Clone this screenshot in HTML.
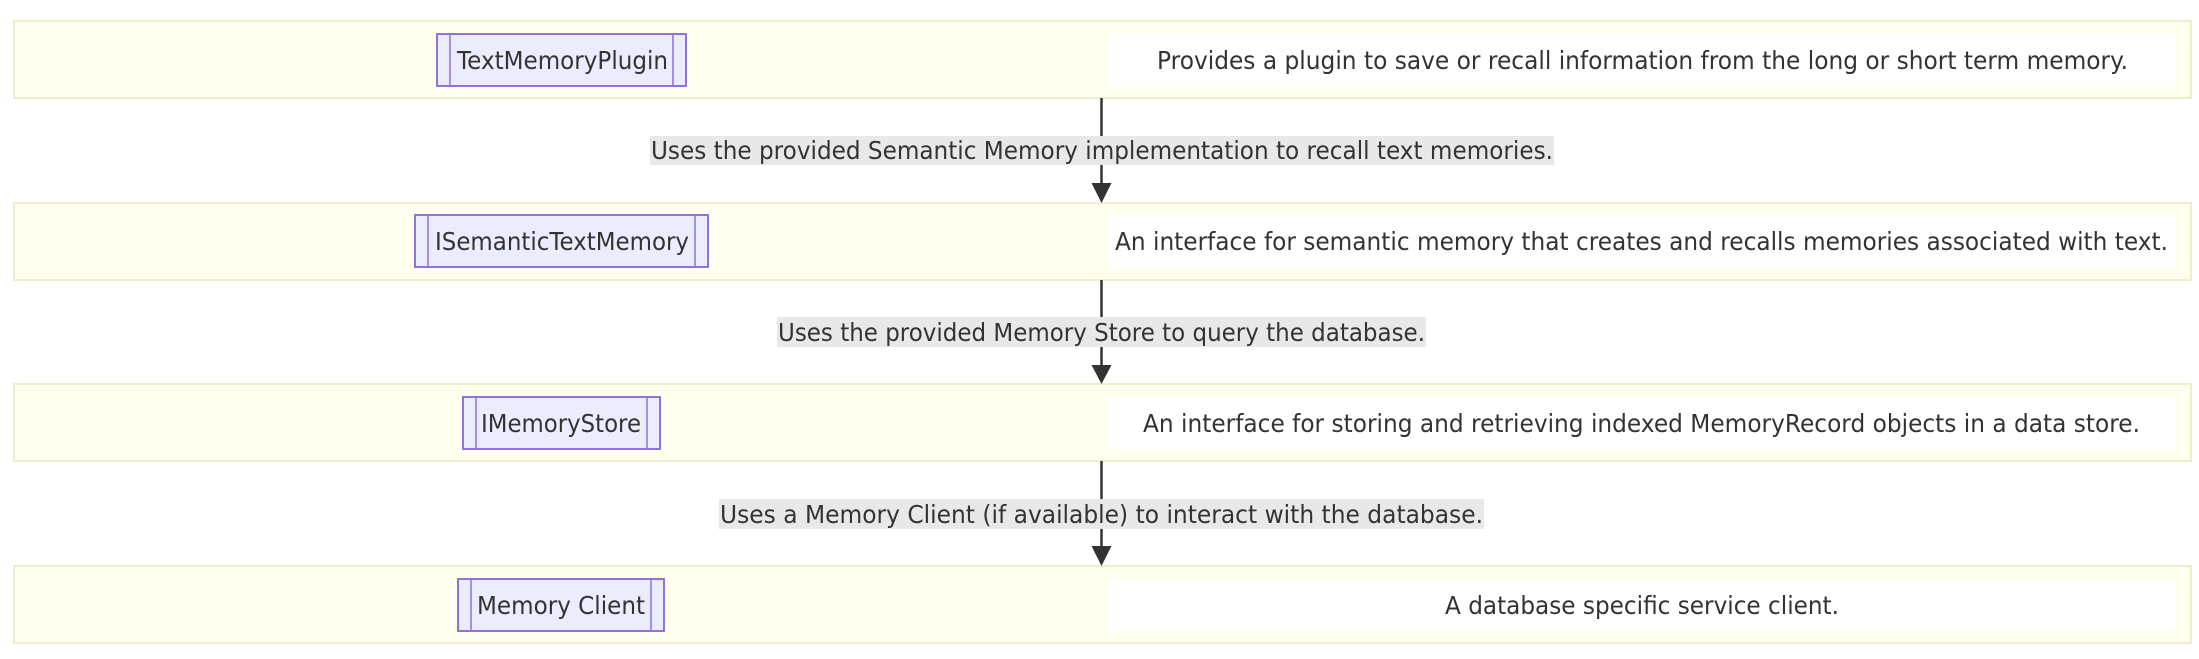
<!DOCTYPE html>
<html><head><meta charset="utf-8"><style>
html,body{margin:0;padding:0;background:#fff;width:2199px;height:659px;overflow:hidden}
text{font-family:"DejaVu Sans","Liberation Sans",sans-serif;font-size:25px;fill:#333}
</style></head><body>
<svg width="2199" height="659" viewBox="0 0 2199 659" xmlns="http://www.w3.org/2000/svg">
<rect x="0" y="0" width="2199" height="659" fill="#fff"/>
<g fill="#fffff0" stroke="#eeeecc" stroke-width="2">
<rect x="14" y="21" width="2177" height="77"/>
<rect x="14" y="203" width="2177" height="77"/>
<rect x="14" y="384" width="2177" height="77"/>
<rect x="14" y="566" width="2177" height="77"/>
</g>
<g fill="#fff">
<rect x="1108" y="34" width="1068" height="52"/>
<rect x="1108" y="216" width="1068" height="52"/>
<rect x="1108" y="397" width="1068" height="52"/>
<rect x="1108" y="579" width="1068" height="52"/>
</g>
<g stroke="#333" stroke-width="2.5">
<line x1="1101.5" y1="98" x2="1101.5" y2="186"/>
<line x1="1101.5" y1="280" x2="1101.5" y2="367"/>
<line x1="1101.5" y1="461" x2="1101.5" y2="548"/>
</g>
<g fill="#333">
<polygon points="1091.5,183 1111.5,183 1101.5,203"/>
<polygon points="1091.5,365 1111.5,365 1101.5,384"/>
<polygon points="1091.5,546 1111.5,546 1101.5,566"/>
</g>
<g fill="#e8e8e8">
<rect x="650" y="136" width="904" height="29"/>
<rect x="777" y="317" width="649" height="30"/>
<rect x="719" y="499" width="765" height="30"/>
</g>
<g fill="#ececff" stroke="#9370db" stroke-width="2">
<rect x="437" y="34" width="249" height="52"/>
<rect x="415" y="215" width="293" height="52"/>
<rect x="463" y="397" width="197" height="52"/>
<rect x="458" y="579" width="206" height="52"/>
</g>
<g stroke="#9370db" stroke-width="1.5">
<line x1="450" y1="34" x2="450" y2="86"/><line x1="673" y1="34" x2="673" y2="86"/>
<line x1="428" y1="215" x2="428" y2="267"/><line x1="695" y1="215" x2="695" y2="267"/>
<line x1="476" y1="397" x2="476" y2="449"/><line x1="647" y1="397" x2="647" y2="449"/>
<line x1="471" y1="579" x2="471" y2="631"/><line x1="651" y1="579" x2="651" y2="631"/>
</g>
<text x="457" y="69" textLength="211" lengthAdjust="spacingAndGlyphs">TextMemoryPlugin</text>
<text x="435" y="250" textLength="254" lengthAdjust="spacingAndGlyphs">ISemanticTextMemory</text>
<text x="481" y="432" textLength="160" lengthAdjust="spacingAndGlyphs">IMemoryStore</text>
<text x="477" y="614" textLength="168" lengthAdjust="spacingAndGlyphs">Memory Client</text>
<text x="1157" y="69" textLength="971" lengthAdjust="spacingAndGlyphs">Provides a plugin to save or recall information from the long or short term memory.</text>
<text x="1115" y="250" textLength="1053" lengthAdjust="spacingAndGlyphs">An interface for semantic memory that creates and recalls memories associated with text.</text>
<text x="1143" y="432" textLength="997" lengthAdjust="spacingAndGlyphs">An interface for storing and retrieving indexed MemoryRecord objects in a data store.</text>
<text x="1445" y="614" textLength="394" lengthAdjust="spacingAndGlyphs">A database specific service client.</text>
<text x="651" y="159" textLength="902" lengthAdjust="spacingAndGlyphs">Uses the provided Semantic Memory implementation to recall text memories.</text>
<text x="778" y="341" textLength="647" lengthAdjust="spacingAndGlyphs">Uses the provided Memory Store to query the database.</text>
<text x="720" y="523" textLength="763" lengthAdjust="spacingAndGlyphs">Uses a Memory Client (if available) to interact with the database.</text>
</svg>
</body></html>
